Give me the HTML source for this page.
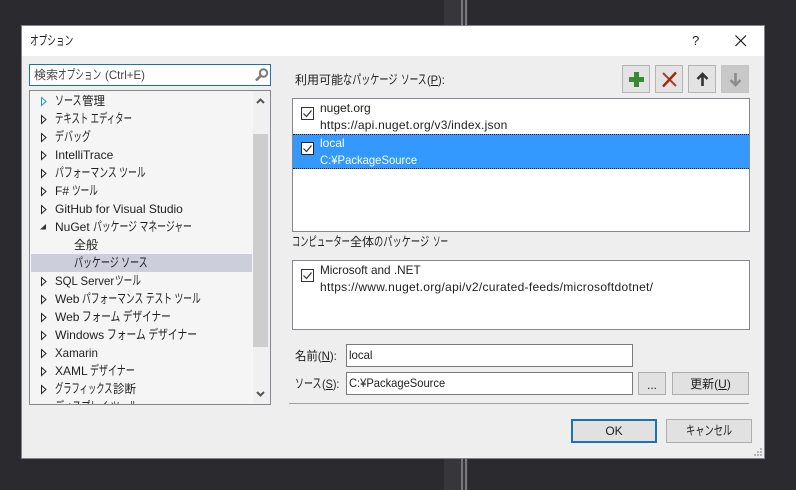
<!DOCTYPE html>
<html lang="ja"><head><meta charset="utf-8">
<style>
html,body{margin:0;padding:0;width:796px;height:490px;overflow:hidden;background:#2a2a2f;}
body{position:relative;font-family:"Liberation Sans","Noto Sans CJK JP",sans-serif;font-size:12px;color:#1e1e1e;}
.a{position:absolute;box-sizing:border-box;}
.t{position:absolute;white-space:nowrap;line-height:18px;height:18px;transform:scaleX(var(--k,1));transform-origin:0 50%;}
.j{font-size:13px;}
.box{position:absolute;box-sizing:border-box;background:#fff;border:1px solid #828790;}
.btn{position:absolute;box-sizing:border-box;background:#e1e1e1;border:1px solid #adadad;text-align:center;}
.tb{position:absolute;box-sizing:border-box;top:65px;width:28px;height:28px;background:#e3e3e3;border:1px solid #b4b4b4;}
u{text-decoration:underline;}
</style></head><body>
<div class="a" style="left:444px;top:0;width:24px;height:490px;background:#36363b"></div>
<div class="a" style="left:461px;top:0;width:2px;height:490px;background:#77777c"></div>
<div class="a" style="left:465px;top:0;width:2px;height:490px;background:#77777c"></div>

<div class="a" style="left:21px;top:25px;width:744px;height:434px;background:#eeeeee;border:1px solid #7f858c"></div>
<div class="a" style="left:22px;top:26px;width:742px;height:30px;background:#fff"></div>
<div class="t j" style="left:30px;top:32px;--k:.665">オプション</div>
<div class="t" style="left:692px;top:32px;font-size:13px">?</div>
<svg class="a" style="left:735px;top:35px" width="12" height="12"><path d="M.5.5L11 11M11 .5L.5 11" stroke="#111" stroke-width="1.1" fill="none"/></svg>

<!-- search -->
<div class="box" style="left:29px;top:64px;width:242px;height:22px;border-color:#1c73ae"></div>
<div class="t" style="left:34px;top:66px;color:#444">検索</div>
<div class="t j" style="left:58px;top:66px;color:#444;--k:.665">オプション</div>
<div class="t" style="left:105px;top:66px;color:#444;--k:.96">(Ctrl+E)</div>
<svg class="a" style="left:254px;top:67px" width="16" height="15"><circle cx="9.5" cy="6" r="3.700" fill="none" stroke="#7a7a7a" stroke-width="2"/><path d="M6.500 9L2 13.500" stroke="#7a7a7a" stroke-width="2.600"/></svg>

<!-- tree -->
<div class="a" style="left:29px;top:90px;width:242px;height:315px;background:#f5f5f5;border:1px solid #828790;overflow:hidden">
 <div class="a" style="left:1px;top:163px;width:221px;height:18px;background:#cccedb"></div>
 <div class="a" style="left:223px;top:0;width:17px;height:313px;background:#f0f0f0"></div>
 <div class="a" style="left:223px;top:43px;width:15px;height:213px;background:#cdcdcd"></div>
 <svg class="a" style="left:226px;top:6px" width="10" height="8"><path d="M1 6L4.500 2.500 8 6" stroke="#555" stroke-width="2" fill="none"/></svg>
 <svg class="a" style="left:226px;top:299px" width="10" height="8"><path d="M1 2L4.500 5.500 8 2" stroke="#555" stroke-width="2" fill="none"/></svg>

 <div class="t j" style="left:25px;top:1px;--k:.69">ソース</div><div class="t" style="left:52px;top:1px;--k:.96">管理</div>
 <div class="t j" style="left:25px;top:19px;--k:.645">テキスト エディター</div>
 <div class="t j" style="left:25px;top:37px;--k:.69">デバッグ</div>
 <div class="t" style="left:25px;top:55px">IntelliTrace</div>
 <div class="t j" style="left:25px;top:73px;--k:.68">パフォーマンス ツール</div>
 <div class="t" style="left:25px;top:91px">F#</div><div class="t j" style="left:42px;top:91px;--k:.665">ツール</div>
 <div class="t" style="left:25px;top:109px">GitHub for Visual Studio</div>
 <div class="t" style="left:25px;top:127px">NuGet</div><div class="t j" style="left:63px;top:127px;--k:.68">パッケージ マネージャー</div>
 <div class="t" style="left:44px;top:145px">全般</div>
 <div class="t j" style="left:44px;top:163px;--k:.69">パッケージ ソース</div>
 <div class="t" style="left:25px;top:181px;--k:.95">SQL Server</div><div class="t j" style="left:85px;top:181px;--k:.665">ツール</div>
 <div class="t" style="left:25px;top:199px">Web</div><div class="t j" style="left:52px;top:199px;--k:.675">パフォーマンス テスト ツール</div>
 <div class="t" style="left:25px;top:217px">Web</div><div class="t j" style="left:52px;top:217px;--k:.74">フォーム デザイナー</div>
 <div class="t" style="left:25px;top:235px;--k:1.01">Windows</div><div class="t j" style="left:77px;top:235px;--k:.75">フォーム デザイナー</div>
 <div class="t" style="left:25px;top:253px;--k:.96">Xamarin</div>
 <div class="t" style="left:25px;top:271px">XAML</div><div class="t j" style="left:60px;top:271px;--k:.69">デザイナー</div>
 <div class="t j" style="left:25px;top:289px;--k:.637">グラフィックス</div><div class="t" style="left:83px;top:289px;--k:.96">診断</div>
 <div class="t j" style="left:25px;top:307px;--k:.69">ディスプレイ ツール</div>
</div>
<svg class="a" style="left:39px;top:95px" width="10" height="310">
 <g fill="none" stroke="#222" stroke-width="1">
 <path stroke="#1c97ea" d="M2.500 2.500L7 6.500 2.500 10.500Z"/>
 <path d="M2.500 20.500L7 24.500 2.500 28.500Z"/>
 <path d="M2.500 38.500L7 42.500 2.500 46.500Z"/>
 <path d="M2.500 56.500L7 60.500 2.500 64.500Z"/>
 <path d="M2.500 74.500L7 78.500 2.500 82.500Z"/>
 <path d="M2.500 92.500L7 96.500 2.500 100.500Z"/>
 <path d="M2.500 110.500L7 114.500 2.500 118.500Z"/>
 <path d="M2.500 182.500L7 186.500 2.500 190.500Z"/>
 <path d="M2.500 200.500L7 204.500 2.500 208.500Z"/>
 <path d="M2.500 218.500L7 222.500 2.500 226.500Z"/>
 <path d="M2.500 236.500L7 240.500 2.500 244.500Z"/>
 <path d="M2.500 254.500L7 258.500 2.500 262.500Z"/>
 <path d="M2.500 272.500L7 276.500 2.500 280.500Z"/>
 <path d="M2.500 290.500L7 294.500 2.500 298.500Z"/>
 </g>
 <path fill="#333" d="M1 134.500L7 129V134.500Z"/>
</svg>

<!-- right -->
<div class="t" style="left:295px;top:71px">利用可能</div>
<div class="t j" style="left:343px;top:71px;--k:.70">なパッケージ</div>
<div class="t j" style="left:401px;top:71px;--k:.665">ソース</div>
<div class="t" style="left:427px;top:71px;--k:.92">(<u>P</u>):</div>

<div class="tb" style="left:622px">
 <svg class="a" style="left:5px;top:5px" width="17" height="17"><path d="M8.500 1V16M1 8.500H16" stroke="#388a34" stroke-width="5"/></svg>
</div>
<div class="tb" style="left:655px">
 <svg class="a" style="left:5px;top:5px" width="17" height="17"><path d="M2 2L15 15" stroke="#a1413a" stroke-width="2"/><path d="M15 1.500L2 15.500" stroke="#a1260d" stroke-width="2.400"/></svg>
</div>
<div class="tb" style="left:688px">
 <svg class="a" style="left:5px;top:5px" width="17" height="17"><path d="M8.500 15V3M3.500 8L8.500 3 13.500 8" stroke="#333" stroke-width="2.600" fill="none"/></svg>
</div>
<div class="tb" style="left:721px;background:#c8c8c8;border-color:#c4c4c4">
 <svg class="a" style="left:5px;top:5px" width="17" height="17"><path d="M8.500 2V14M3.500 9L8.500 14 13.500 9" stroke="#8d8d8d" stroke-width="2.600" fill="none"/></svg>
</div>

<div class="box" style="left:292px;top:98px;width:458px;height:134px"></div>
<div class="a" style="left:293px;top:134px;width:456px;height:35px;background:#3399ff;border-top:1px dotted #123;border-bottom:1px dotted #123"></div>
<div class="t" style="left:320px;top:99px">nuget.org</div>
<div class="t" style="left:320px;top:116px;letter-spacing:.23px">https://api.nuget.org/v3/index.json</div>
<div class="t" style="left:320px;top:134px;color:#fff">local</div>
<div class="t" style="left:320px;top:151px;color:#fff;--k:.94">C:¥PackageSource</div>

<div class="t j" style="left:292px;top:233px;--k:.637">コンピューター</div>
<div class="t" style="left:350px;top:233px">全体</div>
<div class="t j" style="left:374px;top:233px;--k:.71">のパッケージ</div>
<div class="t j" style="left:433px;top:233px;--k:.58">ソー</div>

<div class="box" style="left:292px;top:260px;width:458px;height:70px"></div>
<div class="t" style="left:320px;top:261px;--k:.98">Microsoft and .NET</div>
<div class="t" style="left:320px;top:278px;letter-spacing:.29px">https://www.nuget.org/api/v2/curated-feeds/microsoftdotnet/</div>

<svg class="a" style="left:301px;top:107px" width="13" height="13"><rect x=".5" y=".5" width="12" height="12" fill="#fff" stroke="#333"/><path d="M2.500 6.500L5.500 9.500 10.500 3.500" stroke="#333" stroke-width="1.200" fill="none"/></svg>
<svg class="a" style="left:301px;top:142px" width="13" height="13"><rect x=".5" y=".5" width="12" height="12" fill="#fff" stroke="#222"/><path d="M2.500 6.500L5.500 9.500 10.500 3.500" stroke="#333" stroke-width="1.200" fill="none"/></svg>
<svg class="a" style="left:301px;top:269px" width="13" height="13"><rect x=".5" y=".5" width="12" height="12" fill="#fff" stroke="#333"/><path d="M2.500 6.500L5.500 9.500 10.500 3.500" stroke="#333" stroke-width="1.200" fill="none"/></svg>

<div class="t" style="left:295px;top:347px;--k:.95">名前(<u>N</u>):</div>
<div class="box" style="left:346px;top:344px;width:287px;height:23px;border-color:#7a7a7a"></div>
<div class="t" style="left:349px;top:346px;--k:.95">local</div>
<div class="t j" style="left:295px;top:375px;--k:.69">ソース</div>
<div class="t" style="left:322px;top:375px;--k:.9">(<u>S</u>):</div>
<div class="box" style="left:346px;top:372px;width:287px;height:23px;border-color:#7a7a7a"></div>
<div class="t" style="left:349px;top:374px;--k:.93">C:¥PackageSource</div>
<div class="btn" style="left:638px;top:372px;width:28px;height:23px;line-height:24px">...</div>
<div class="btn" style="left:672px;top:372px;width:77px;height:23px;line-height:23px">更新(<u>U</u>)</div>
<div class="a" style="left:289px;top:403px;width:460px;height:1px;background:#a0a0a0"></div>
<div class="btn" style="left:571px;top:419px;width:86px;height:24px;line-height:21px;border:2px solid #1c73ae">OK</div>
<div class="btn" style="left:666px;top:419px;width:86px;height:24px"></div>
<div class="t j" style="left:686px;top:422px;--k:.71">キャンセル</div>
<svg class="a" style="left:753px;top:447px" width="10" height="10" fill="#b4b4b4"><rect x="7" y="1" width="2" height="2"/><rect x="4" y="4" width="2" height="2"/><rect x="7" y="4" width="2" height="2"/><rect x="1" y="7" width="2" height="2"/><rect x="4" y="7" width="2" height="2"/><rect x="7" y="7" width="2" height="2"/></svg>
</body></html>
